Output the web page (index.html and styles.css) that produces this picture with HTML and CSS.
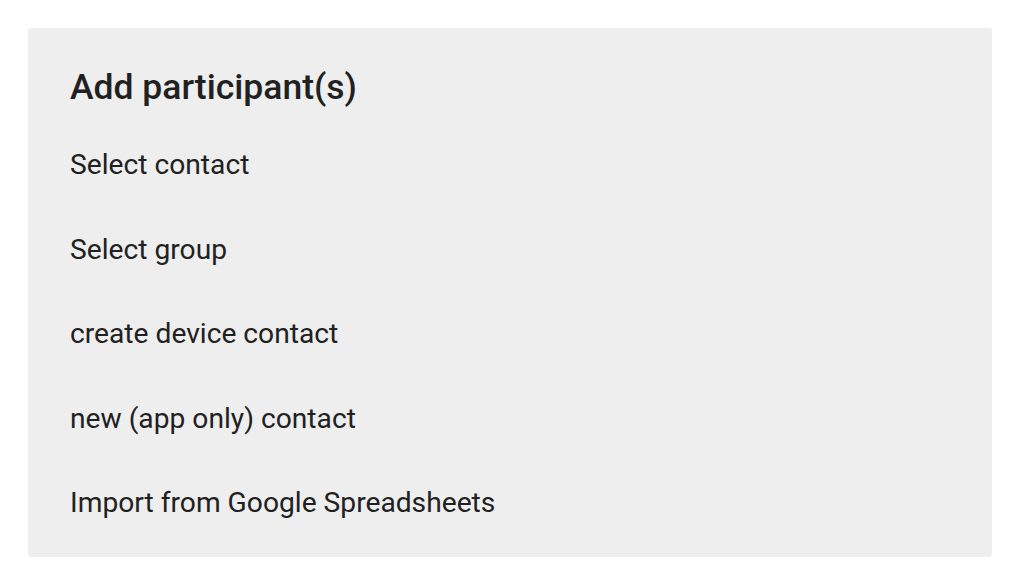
FILE: index.html
```html
<!DOCTYPE html>
<html>
<head>
<meta charset="utf-8">
<link rel="stylesheet" href="styles.css">
</head>
<body>
<div class="dialog">
  <h1 class="title">Add participant(s)</h1>
  <ul class="list">
    <li class="item">Select contact</li>
    <li class="item">Select group</li>
    <li class="item">create device contact</li>
    <li class="item">new (app only) contact</li>
    <li class="item">Import from Google Spreadsheets</li>
  </ul>
</div>
</body>
</html>
```
FILE: styles.css
```css
html, body {
  margin: 0;
  padding: 0;
  background: #ffffff;
}
body {
  padding: 28px 28px 0 28px;
  font-family: Roboto, "Noto Sans", sans-serif;
  color: #212121;
}
.dialog {
  width: 964px;
  height: 529px;
  box-sizing: border-box;
  background: #eeeeee;
  border-radius: 3px;
  padding: 39px 0 0 42px;
  display: flex;
  flex-direction: column;
}
.title {
  margin: 0;
  font-size: 35.5px;
  font-weight: 500;
  line-height: 40px;
  height: 40px;
  margin-bottom: 16px;
}
.list {
  list-style: none;
  margin: 0;
  padding: 0;
}
.item {
  font-size: 28.2px;
  line-height: 84.5px;
  height: 84.5px;
}
```
